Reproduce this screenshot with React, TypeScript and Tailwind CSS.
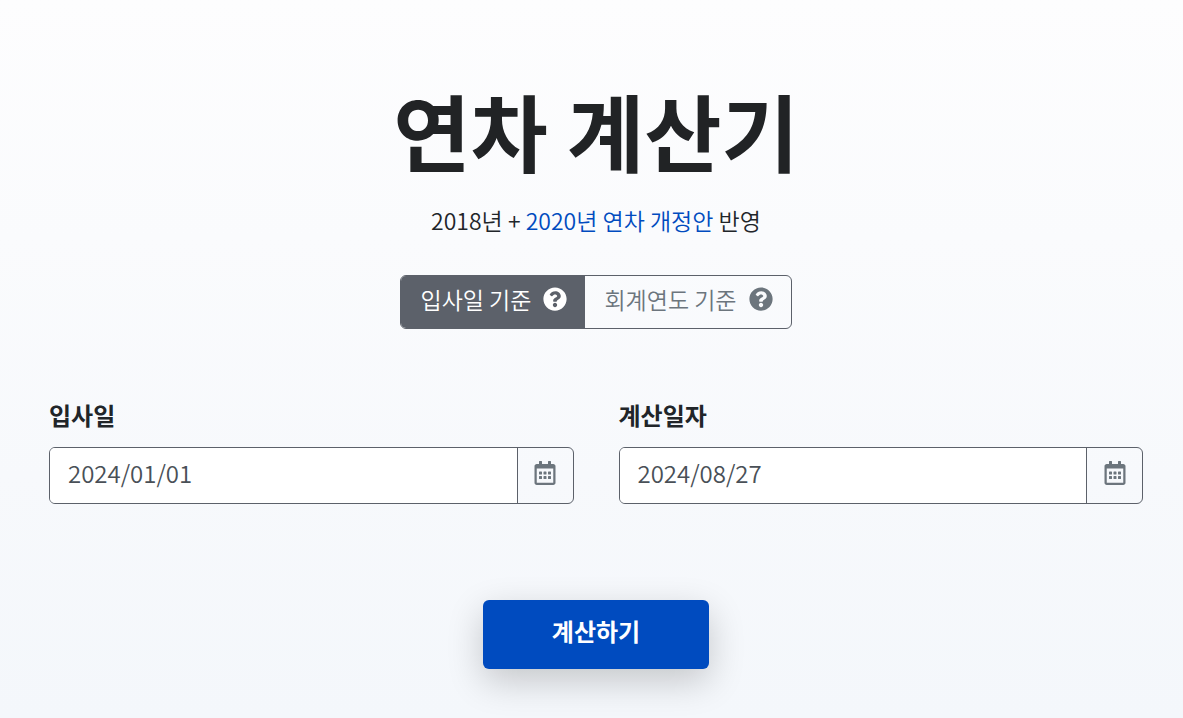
import React, { useState } from 'react';
import { FaQuestionCircle, FaRegCalendarAlt } from 'react-icons/fa';

interface DateFieldProps {
  id: string;
  label: string;
  value: string;
  onChange: (value: string) => void;
}

function DateField({ id, label, value, onChange }: DateFieldProps) {
  return (
    <div className="flex-1 min-w-0">
      <label htmlFor={id} className="block mb-4 text-2xl leading-8 font-bold text-[#212529]">
        {label}
      </label>
      <div className="flex h-[57px] rounded-md border border-[#5c616a] overflow-hidden">
        <input
          id={id}
          type="text"
          value={value}
          onChange={(e) => onChange(e.target.value)}
          className="flex-1 min-w-0 bg-white pl-[18px] pr-4 pb-1.5 text-2xl font-[350] text-[#495057] outline-none"
        />
        <button
          type="button"
          aria-label={`${label} 선택`}
          className="w-14 flex items-center justify-center border-l border-[#5c616a] pb-1.5 text-[#6c757d]"
        >
          <FaRegCalendarAlt size={24} />
        </button>
      </div>
    </div>
  );
}

function App() {
  const [basis, setBasis] = useState('join');
  const [joinDate, setJoinDate] = useState('2024/01/01');
  const [calcDate, setCalcDate] = useState('2024/08/27');

  const tabClass = (active: boolean) =>
    `flex items-center gap-3 pl-[19px] pr-[18px] pb-1.5 text-[23px] font-[350] ${
      active ? 'bg-[#5c616a] text-white' : 'text-[#6c757d]'
    }`;

  return (
    <main className="min-h-screen w-full bg-linear-to-b from-[#fdfdfe] to-[#f4f7fb] pl-[49px] pr-10 pt-20 pb-12 font-['Noto_Sans_CJK_KR',sans-serif] text-[#212529]">
      <div className="flex flex-col items-center">
        <h1 className="text-[84px] leading-[100px] font-bold text-[#212325]">연차 계산기</h1>
        <p className="mt-6 text-[23px] leading-8 font-[350]">
          2018년 +{' '}
          <a href="#revision" className="text-[#004bbf]">
            2020년 연차 개정안
          </a>{' '}
          반영
        </p>

        <div className="mt-[39px] flex h-[54px] rounded-md border border-[#5c616a] overflow-hidden">
          <button type="button" onClick={() => setBasis('join')} className={tabClass(basis === 'join')}>
            입사일 기준
            <FaQuestionCircle size={24} />
          </button>
          <button type="button" onClick={() => setBasis('fiscal')} className={tabClass(basis === 'fiscal')}>
            회계연도 기준
            <FaQuestionCircle size={24} />
          </button>
        </div>
      </div>

      <form onSubmit={(e) => e.preventDefault()}>
        <div className="mt-[70px] flex gap-[45px]">
          <DateField id="join-date" label="입사일" value={joinDate} onChange={setJoinDate} />
          <DateField id="calc-date" label="계산일자" value={calcDate} onChange={setCalcDate} />
        </div>

        <div className="mt-24 flex justify-center">
          <button
            type="submit"
            className="w-[226px] h-[69px] rounded-md bg-[#004bbf] pb-2 text-2xl font-bold text-white shadow-[0_12px_36px_rgba(0,0,0,0.2)]"
          >
            계산하기
          </button>
        </div>
      </form>
    </main>
  );
}

export default App;
